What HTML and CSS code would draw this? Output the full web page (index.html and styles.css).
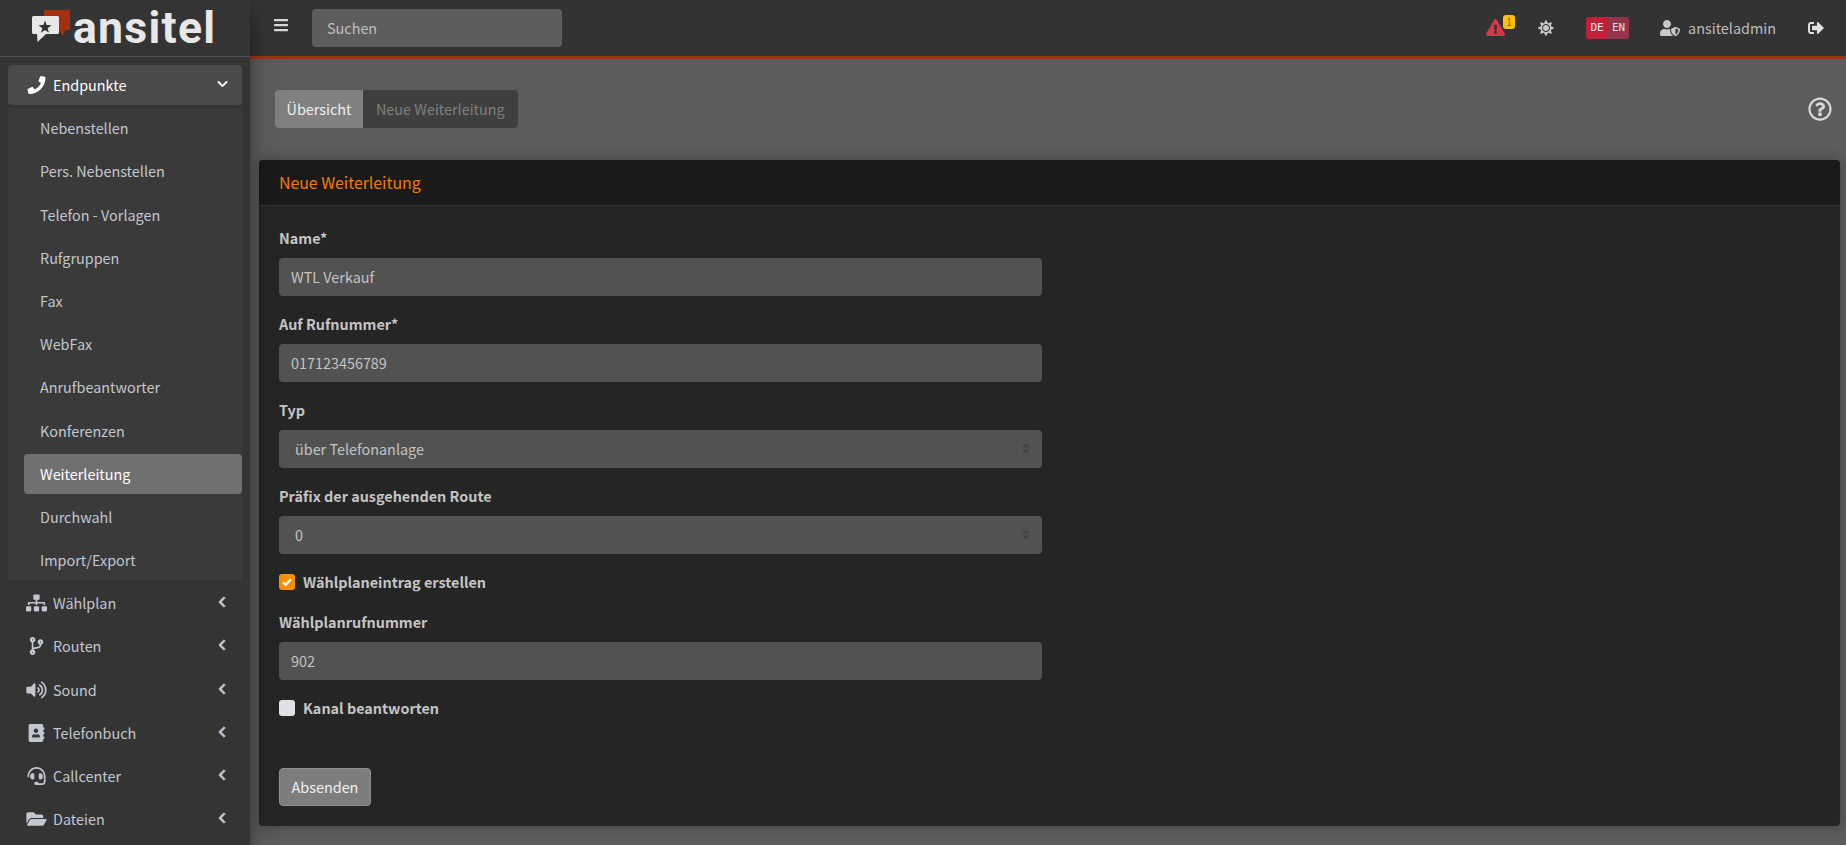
FILE: index.html
```html
<!DOCTYPE html>
<html lang="de">
<head>
<meta charset="utf-8">
<title>ansitel</title>
<link rel="stylesheet" href="styles.css">
</head>
<body>
<svg class="defs" aria-hidden="true"><defs>
<symbol id="chev-l" viewBox="0 0 320 512"><path d="M34.52 239.03L228.87 44.69c9.37-9.37 24.57-9.37 33.94 0l22.67 22.67c9.36 9.36 9.37 24.52.04 33.9L131.49 256l154.02 154.75c9.34 9.38 9.32 24.54-.04 33.9l-22.67 22.67c-9.37 9.37-24.57 9.37-33.94 0L34.52 272.97c-9.37-9.37-9.37-24.57 0-33.94z"/></symbol>
<symbol id="updown" viewBox="0 0 16 20"><path d="M8 0l8 8H0zM8 20l-8-8h16z"/></symbol>
</defs></svg>
<aside class="sidebar">
  <div class="brand">
    <svg class="brand-icon" viewBox="0 0 38 33"><path fill="#a5300f" d="M12 0h25a1 1 0 0 1 1 1v18a1 1 0 0 1-1 1h-4l-2 6-4-6H12z"/><path fill="#e8e8e8" d="M1.500 6h24A1.500 1.500 0 0 1 27 7.500V22.500A1.500 1.500 0 0 1 25.500 24H14l-8.500 8-.5-8H1.500A1.500 1.500 0 0 1 0 22.500V7.500A1.500 1.500 0 0 1 1.500 6z"/><path fill="#2e2e2e" d="M13 10.500l1.600 4.600 4.900.1-3.900 3 1.400 4.600-4-2.700-4 2.700 1.400-4.600-3.900-3 4.900-.1z"/></svg>
    <span class="brand-text">ansitel</span>
  </div>
  <nav class="nav">
    <a class="nav-link open"><svg class="ico" viewBox="0 0 512 512"><path d="M493.4 24.6l-104-24c-11.3-2.6-22.9 3.3-27.5 13.9l-48 112c-4.2 9.8-1.4 21.3 6.9 28l60.6 49.6c-36 76.7-98.9 140.500-177.200 177.200l-49.600-60.600c-6.800-8.300-18.200-11.100-28-6.900l-112 48C3.900 366.500-2 378.100.6 389.400l24 104C27.100 504.200 36.700 512 48 512c256.100 0 464-207.500 464-464 0-11.200-7.700-20.900-18.600-23.400z"/></svg><span class="nav-label">Endpunkte</span><svg class="chev-down" viewBox="0 0 448 512"><path d="M207.029 381.476L12.686 187.132c-9.373-9.373-9.373-24.569 0-33.941l22.667-22.667c9.357-9.357 24.522-9.375 33.901-.04L224 284.505l154.745-154.021c9.379-9.335 24.544-9.317 33.901.04l22.667 22.667c9.373 9.373 9.373 24.569 0 33.941L240.971 381.476c-9.373 9.372-24.569 9.372-33.942 0z"/></svg></a>
    <ul class="subnav">
      <li><a class="sub-link">Nebenstellen</a></li>
      <li><a class="sub-link">Pers. Nebenstellen</a></li>
      <li><a class="sub-link">Telefon - Vorlagen</a></li>
      <li><a class="sub-link">Rufgruppen</a></li>
      <li><a class="sub-link">Fax</a></li>
      <li><a class="sub-link">WebFax</a></li>
      <li><a class="sub-link">Anrufbeantworter</a></li>
      <li><a class="sub-link">Konferenzen</a></li>
      <li><a class="sub-link active">Weiterleitung</a></li>
      <li><a class="sub-link">Durchwahl</a></li>
      <li><a class="sub-link">Import/Export</a></li>
    </ul>
    <a class="nav-link"><svg class="ico" viewBox="0 0 640 512"><path d="M128 352H32c-17.670 0-32 14.330-32 32v96c0 17.670 14.330 32 32 32h96c17.670 0 32-14.330 32-32v-96c0-17.670-14.330-32-32-32zm-24-80h192v48h48v-48h192v48h48v-57.590c0-21.170-17.230-38.410-38.410-38.410H344v-64h40c17.670 0 32-14.330 32-32V32c0-17.670-14.330-32-32-32H256c-17.670 0-32 14.330-32 32v96c0 17.670 14.330 32 32 32h40v64H94.410C73.230 224 56 241.230 56 262.410V320h48v-48zm264 80h-96c-17.670 0-32 14.330-32 32v96c0 17.670 14.330 32 32 32h96c17.670 0 32-14.330 32-32v-96c0-17.670-14.330-32-32-32zm240 0h-96c-17.670 0-32 14.330-32 32v96c0 17.670 14.330 32 32 32h96c17.670 0 32-14.330 32-32v-96c0-17.670-14.330-32-32-32z"/></svg><span class="nav-label">Wählplan</span><svg class="chev"><use href="#chev-l"/></svg></a>
    <a class="nav-link"><svg class="ico" viewBox="0 0 384 512"><path d="M384 144c0-44.200-35.800-80-80-80s-80 35.800-80 80c0 36.400 24.300 67.100 57.500 76.800-.6 16.100-4.200 28.500-11 36.900-15.400 19.200-49.300 22.400-85.200 25.700-28.200 2.600-57.400 5.400-81.300 16.900v-144c32.500-10.200 56-40.500 56-76.300 0-44.200-35.800-80-80-80S0 35.800 0 80c0 35.800 23.500 66.100 56 76.300v199.300C23.500 365.900 0 396.200 0 432c0 44.200 35.800 80 80 80s80-35.800 80-80c0-34-21.200-63.100-51.200-74.600 3.100-5.200 7.800-9.800 14.900-13.400 16.200-8.200 40.400-10.400 66.100-12.800 42.200-3.900 90-8.400 118.200-43.400 14-17.400 21.100-39.800 21.600-67.900 31.600-10.800 54.400-40.700 54.400-75.900zM80 64c8.800 0 16 7.200 16 16s-7.200 16-16 16-16-7.200-16-16 7.200-16 16-16zm0 384c-8.800 0-16-7.200-16-16s7.200-16 16-16 16 7.200 16 16-7.200 16-16 16zm224-320c8.800 0 16 7.200 16 16s-7.200 16-16 16-16-7.200-16-16 7.200-16 16-16z"/></svg><span class="nav-label">Routen</span><svg class="chev"><use href="#chev-l"/></svg></a>
    <a class="nav-link"><svg class="ico" viewBox="0 0 576 512"><path d="M215.030 71.050L126.060 160H24c-13.260 0-24 10.740-24 24v144c0 13.250 10.740 24 24 24h102.060l88.970 88.950c15.030 15.030 40.970 4.470 40.970-16.970V88.020c0-21.460-25.960-32-40.970-16.970zm233.320-51.080c-11.170-7.330-26.180-4.240-33.510 6.950-7.340 11.170-4.220 26.180 6.950 33.510 66.270 43.490 105.820 116.600 105.820 195.580 0 78.980-39.550 152.090-105.820 195.580-11.170 7.320-14.290 22.340-6.950 33.500 7.040 10.710 21.930 14.560 33.510 6.950C528.270 439.580 576 351.330 576 256S528.270 72.430 448.350 19.970zM480 256c0-63.530-32.060-121.940-85.770-156.240-11.190-7.140-26.030-3.820-33.120 7.460s-3.780 26.210 7.410 33.360C408.270 165.970 432 209.110 432 256s-23.730 90.030-63.480 115.420c-11.190 7.140-14.500 22.070-7.410 33.360 6.510 10.360 21.120 15.140 33.120 7.460C447.940 377.940 480 319.540 480 256zm-141.770-76.870c-11.580-6.330-26.190-2.160-32.610 9.450-6.390 11.610-2.160 26.200 9.450 32.610C327.980 228.280 336 241.630 336 256c0 14.380-8.020 27.720-20.920 34.810-11.610 6.410-15.840 21-9.450 32.610 6.440 11.660 21.050 15.800 32.610 9.450 28.230-15.550 45.770-45 45.770-76.880s-17.540-61.320-45.780-76.860z"/></svg><span class="nav-label">Sound</span><svg class="chev"><use href="#chev-l"/></svg></a>
    <a class="nav-link"><svg class="ico" viewBox="0 0 448 512"><path d="M436 160c6.600 0 12-5.400 12-12v-40c0-6.600-5.400-12-12-12h-20V48c0-26.500-21.500-48-48-48H48C21.500 0 0 21.500 0 48v416c0 26.500 21.500 48 48 48h320c26.500 0 48-21.500 48-48v-48h20c6.600 0 12-5.400 12-12v-40c0-6.600-5.400-12-12-12h-20v-64h20c6.600 0 12-5.400 12-12v-40c0-6.600-5.400-12-12-12h-20v-64h20zm-228-32c35.300 0 64 28.700 64 64s-28.700 64-64 64-64-28.700-64-64 28.700-64 64-64zm112 236.800c0 10.600-10 19.200-22.400 19.200H118.400C106 384 96 375.400 96 364.800v-19.200c0-31.800 30.100-57.600 67.200-57.600h5c12.300 5.100 25.700 8 39.800 8s27.600-2.900 39.800-8h5c37.100 0 67.200 25.800 67.200 57.600v19.200z"/></svg><span class="nav-label">Telefonbuch</span><svg class="chev"><use href="#chev-l"/></svg></a>
    <a class="nav-link"><svg class="ico" viewBox="0 0 512 512"><path d="M192 208c0-17.670-14.330-32-32-32h-16c-35.350 0-64 28.650-64 64v48c0 35.350 28.650 64 64 64h16c17.670 0 32-14.330 32-32V208zm176 144c35.350 0 64-28.650 64-64v-48c0-35.350-28.650-64-64-64h-16c-17.670 0-32 14.330-32 32v112c0 17.670 14.330 32 32 32h16zM256 0C113.180 0 4.580 118.830 0 256v16c0 8.840 7.160 16 16 16h16c8.840 0 16-7.160 16-16v-16c0-114.690 93.310-208 208-208s208 93.310 208 208h-.12c.08 2.430.12 165.720.12 165.720 0 23.350-18.930 42.280-42.280 42.280H320c0-26.510-21.490-48-48-48h-32c-26.510 0-48 21.490-48 48s21.490 48 48 48h181.720c49.860 0 90.280-40.420 90.280-90.280V256C507.420 118.830 398.820 0 256 0z"/></svg><span class="nav-label">Callcenter</span><svg class="chev"><use href="#chev-l"/></svg></a>
    <a class="nav-link"><svg class="ico" viewBox="0 0 576 512"><path d="M572.694 292.093L500.270 416.248A63.997 63.997 0 0 1 444.989 448H45.025c-18.523 0-30.064-20.093-20.731-36.093l72.424-124.155A64 64 0 0 1 152 256h399.964c18.523 0 30.064 20.093 20.730 36.093zM152 224h328v-48c0-26.510-21.490-48-48-48H272l-64-64H48C21.490 64 0 85.490 0 112v278.046l69.077-118.418C86.214 242.250 117.989 224 152 224z"/></svg><span class="nav-label">Dateien</span><svg class="chev"><use href="#chev-l"/></svg></a>
  </nav>
</aside>
<div class="main">
  <header class="topbar">
    <svg class="burger" viewBox="0 0 448 512"><path d="M16 132h416c8.837 0 16-7.163 16-16V76c0-8.837-7.163-16-16-16H16C7.163 60 0 67.163 0 76v40c0 8.837 7.163 16 16 16zm0 160h416c8.837 0 16-7.163 16-16v-40c0-8.837-7.163-16-16-16H16c-8.837 0-16 7.163-16 16v40c0 8.837 7.163 16 16 16zm0 160h416c8.837 0 16-7.163 16-16v-40c0-8.837-7.163-16-16-16H16c-8.837 0-16 7.163-16 16v40c0 8.837 7.163 16 16 16z"/></svg>
    <input class="search" type="text" placeholder="Suchen">
    <div class="top-right">
      <div class="alert"><svg class="alert-ico" viewBox="0 0 576 512"><path d="M569.517 440.013C587.975 472.007 564.806 512 527.940 512H48.054c-36.937 0-59.999-40.055-41.577-71.987L246.423 24.035c18.467-32.009 64.720-31.951 83.154 0l239.940 416.978zM288 354c-25.405 0-46 20.595-46 46s20.595 46 46 46 46-20.595 46-46-20.595-46-46-46zm-43.673-165.346l7.418 136c.347 6.364 5.609 11.346 11.982 11.346h48.546c6.373 0 11.635-4.982 11.982-11.346l7.418-136c.375-6.874-5.098-12.654-11.982-12.654h-63.383c-6.884 0-12.356 5.780-11.981 12.654z"/></svg><span class="badge">1</span></div>
      <svg class="sun" viewBox="0 0 512 512"><path d="M256 160c-52.900 0-96 43.100-96 96s43.100 96 96 96 96-43.100 96-96-43.100-96-96-96zm246.400 80.500l-94.700-47.300 33.500-100.400c4.500-13.600-8.400-26.500-21.900-21.900l-100.400 33.500-47.400-94.800c-6.400-12.800-24.600-12.800-31 0l-47.300 94.700L92.700 70.800c-13.600-4.500-26.500 8.400-21.900 21.900l33.500 100.400-94.700 47.400c-12.800 6.400-12.800 24.600 0 31l94.700 47.300-33.500 100.500c-4.500 13.600 8.400 26.500 21.900 21.900l100.400-33.500 47.300 94.700c6.400 12.800 24.600 12.800 31 0l47.300-94.700 100.400 33.500c13.600 4.500 26.500-8.400 21.900-21.900l-33.500-100.400 94.700-47.300c13-6.500 13-24.700.2-31.100zm-155.900 106c-49.900 49.900-131.100 49.900-181 0-49.900-49.900-49.900-131.100 0-181 49.900-49.900 131.100-49.900 181 0 49.900 49.900 49.900 131.100 0 181z"/></svg>
      <div class="lang"><span class="lang-de">DE</span><span class="lang-en">EN</span></div>
      <div class="user"><svg class="user-ico" viewBox="0 0 640 512"><path d="M622.300 271.100l-115.200-45c-4.100-1.600-12.600-3.700-22.200 0l-115.200 45c-10.700 4.200-17.700 14-17.700 24.900 0 111.600 68.700 188.800 132.900 213.900 9.600 3.700 18 1.600 22.200 0C558.400 489.900 640 420.500 640 296c0-10.900-7-20.700-17.700-24.900zM496 462.400V273.300l95.500 37.300c-5.600 87.100-60.900 135.400-95.500 151.800zM224 256c70.700 0 128-57.300 128-128S294.700 0 224 0 96 57.300 96 128s57.300 128 128 128zm96 40c0-2.500.8-4.800 1.100-7.200-2.500-.1-4.900-.8-7.500-.8h-16.700c-22.200 10.200-46.900 16-72.900 16s-50.600-5.800-72.900-16h-16.700C60.200 288 0 348.200 0 422.400V464c0 26.500 21.500 48 48 48h352c6.800 0 13.300-1.500 19.200-4-54-42.900-99.200-116.700-99.200-212z"/></svg><span>ansiteladmin</span></div>
      <svg class="logout" viewBox="0 0 512 512"><path d="M497 273L329 441c-15 15-41 4.500-41-17v-96H152c-13.300 0-24-10.700-24-24v-96c0-13.300 10.700-24 24-24h136V88c0-21.400 25.900-32 41-17l168 168c9.300 9.400 9.300 24.600 0 34zM192 436v-40c0-6.600-5.400-12-12-12H96c-17.700 0-32-14.300-32-32V160c0-17.700 14.300-32 32-32h84c6.600 0 12-5.400 12-12V76c0-6.600-5.400-12-12-12H96c-53 0-96 43-96 96v192c0 53 43 96 96 96h84c6.600 0 12-5.400 12-12z"/></svg>
    </div>
  </header>
  <main class="content">
    <div class="toolbar">
      <div class="tabs"><span class="tab current">Übersicht</span><span class="tab">Neue Weiterleitung</span></div>
      <svg class="help" viewBox="0 0 512 512"><path d="M256 8C119.043 8 8 119.083 8 256c0 136.997 111.043 248 248 248s248-111.003 248-248C504 119.083 392.957 8 256 8zm0 448c-110.532 0-200-89.431-200-200 0-110.495 89.472-200 200-200 110.491 0 200 89.471 200 200 0 110.530-89.431 200-200 200zm107.244-255.200c0 67.052-72.421 68.084-72.421 92.863V300c0 6.627-5.373 12-12 12h-45.647c-6.627 0-12-5.373-12-12v-8.659c0-35.745 27.100-50.034 47.579-61.516 17.561-9.845 28.324-16.541 28.324-29.579 0-17.246-21.999-28.693-39.784-28.693-23.189 0-33.894 10.977-48.942 29.969-4.057 5.120-11.460 6.071-16.666 2.124l-27.824-21.098c-5.107-3.872-6.251-11.066-2.644-16.363C184.846 131.491 214.940 112 261.794 112c49.071 0 101.450 38.304 101.450 88.800zM298 368c0 23.159-18.841 42-42 42s-42-18.841-42-42 18.841-42 42-42 42 18.841 42 42z"/></svg>
    </div>
    <section class="card">
      <h2 class="card-title">Neue Weiterleitung</h2>
      <form class="card-body">
        <div class="group"><label class="label">Name*</label><input class="control" type="text" value="WTL Verkauf"></div>
        <div class="group"><label class="label">Auf Rufnummer*</label><input class="control" type="text" value="017123456789"></div>
        <div class="group"><label class="label">Typ</label><div class="select-wrap"><select class="control select"><option>über Telefonanlage</option></select><svg class="updown"><use href="#updown"/></svg></div></div>
        <div class="group"><label class="label">Präfix der ausgehenden Route</label><div class="select-wrap"><select class="control select"><option>0</option></select><svg class="updown"><use href="#updown"/></svg></div></div>
        <div class="group check-row"><span class="box checked"><svg viewBox="0 0 16 16"><path d="M4 8.300l2.700 2.500L12 5.200" fill="none" stroke="#fff" stroke-width="2.400"/></svg></span><span class="label">Wählplaneintrag erstellen</span></div>
        <div class="group"><label class="label">Wählplanrufnummer</label><input class="control" type="text" value="902"></div>
        <div class="group check-row"><span class="box"></span><span class="label">Kanal beantworten</span></div>
        <button class="submit" type="button">Absenden</button>
      </form>
    </section>
  </main>
</div>
</body>
</html>
```
FILE: styles.css
```css
* { box-sizing: border-box; }
html, body { height: 100%; }
body {
  margin: 0;
  display: flex;
  height: 845px;
  overflow: hidden;
  background: #5c5c5c;
  font-family: "Noto Sans CJK SC", "Source Sans Pro", "Noto Sans", sans-serif;
  font-size: 14.4px;
  line-height: 24px;
  color: #c8c8c8;
}
.defs { position: absolute; width: 0; height: 0; }
.sidebar {
  flex: 0 0 250px;
  width: 250px;
  background: #343434;
  box-shadow: 0 14px 28px rgba(0,0,0,.25), 0 10px 10px rgba(0,0,0,.22);
  position: relative;
  z-index: 2;
  overflow: hidden;
}
.brand {
  height: 57px;
  border-bottom: 1px solid #4b545c;
  display: flex;
  align-items: flex-start;
  padding: 2px 0 0 32px;
  gap: 3px;
}
.brand-icon { width: 38px; height: 33px; flex: none; margin-top: 8px; }
.brand-text {
  font-family: Roboto, "Noto Sans", sans-serif;
  font-weight: 700;
  font-size: 44.6px;
  line-height: 52px;
  letter-spacing: 1.25px;
  color: #e8e8e8;
}
.nav { padding: 8px 8px 0; }
.nav-link {
  display: flex;
  align-items: center;
  height: 40px;
  margin-bottom: 3.2px;
  padding: 0 16px 0 19px;
  border-radius: 4px;
  color: #c2c7d0;
}
.nav-link.open { background: #4a4a4a; color: #fff; }
.ico { width: 21px; height: 18px; fill: currentColor; margin-right: 6px; flex: none; margin-left: -1px; }
.nav-label { flex: 1; }
.chev { width: 8px; height: 12px; fill: currentColor; stroke: currentColor; stroke-width: 30; flex: none; margin-top: -2px; }
.chev-down { width: 11px; height: 12px; fill: currentColor; flex: none; margin: -2px -1.5px 0 0; }
.subnav { list-style: none; margin: 0 0 3.2px; padding: 0; background: #3a3a3a; }
.subnav li + li { margin-top: 3.2px; }
.sub-link {
  display: block;
  height: 40px;
  margin-left: 16px;
  padding: 8px 16px;
  border-radius: 4px;
  color: #c2c7d0;
}
.sub-link.active { background: #707070; color: #fff; }
.main { flex: 1; min-width: 0; display: flex; flex-direction: column; }
.topbar {
  flex: none;
  height: 59px;
  background: #333;
  border-bottom: 3px solid #a5300f;
  display: flex;
  align-items: center;
  padding: 0 22px 0 24px;
  box-shadow: 0 1px 4px rgba(0,0,0,.1);
}
.burger { width: 14px; height: 16px; fill: #d8d8d8; margin-top: -6px; }
.search {
  width: 250px;
  height: 38px;
  margin-left: 24px;
  border: 0;
  border-radius: 4px;
  background: #5d5d5d;
  color: #c8c8c8;
  padding: 0 15px 2px;
  font: inherit;
}
.search::placeholder { color: #bdbdbd; opacity: 1; }
.top-right { margin-left: auto; display: flex; align-items: center; color: #bdbdbd; margin-top: -1px; }
.alert { position: relative; width: 19px; height: 17px; margin-right: 33px; }
.alert-ico { display: block; width: 19px; height: 17px; fill: #dc3545; }
.badge {
  position: absolute;
  left: 17px;
  top: -4px;
  width: 12px;
  height: 14px;
  border-radius: 3px;
  background: #ffc107;
  color: #7a6a20;
  font-size: 10px;
  line-height: 14px;
  text-align: center;
}
.sun { width: 16px; height: 16px; fill: #c8c8c8; margin-right: 32px; }
.lang {
  display: flex;
  height: 22px;
  border-radius: 3px;
  overflow: hidden;
  font-family: "DejaVu Sans Mono", monospace;
  font-size: 11px;
  line-height: 22px;
  margin-right: 31px;
}
.lang-de { width: 22px; background: #c21f39; color: #f5f5f5; text-align: center; }
.lang-en { width: 21px; background: #943448; color: #dcdcdc; text-align: center; }
.user { display: flex; align-items: center; gap: 8px; margin-right: 32px; }
.user-ico { width: 20px; height: 16px; fill: #c8c8c8; }
.logout { width: 16px; height: 16px; fill: #e0e0e0; }
.content { flex: 1; min-height: 0; padding: 0 6px 0 9px; background: #5c5c5c; }
.toolbar {
  height: 101px;
  padding: 31px 8px 0 16px;
  display: flex;
  justify-content: space-between;
  align-items: flex-start;
}
.tabs { display: flex; height: 38px; background: #3f3f3f; border-radius: 4px; overflow: hidden; }
.tab { padding: 7px 13px; color: #7f7f7f; }
.tab.current { background: #808080; color: #efefef; padding: 7px 11.5px; }
.help { width: 24px; height: 24px; fill: #d8d8d8; margin-top: 7px; }
.card {
  background: #252525;
  border-radius: 4px;
  height: 666px;
  box-shadow: 0 0 14px rgba(0,0,0,.3);
  overflow: hidden;
}
.card-title {
  margin: 0;
  height: 46px;
  padding: 10px 20px;
  background: #1a1a1a;
  border-bottom: 1px solid #333;
  color: #f57c00;
  font-size: 15.84px;
  font-weight: 400;
  line-height: 26px;
}
.card-body { padding: 20px 20px 0; }
.group { margin-bottom: 16px; width: 763px; }
.label { display: block; font-weight: 700; color: #c4c4c4; margin-bottom: 8px; }
.check-row { display: flex; align-items: center; gap: 8px; height: 24px; }
.check-row .label { margin: 0; }
.control {
  display: block;
  width: 100%;
  height: 38px;
  padding: 0 12px 1px;
  border: 0;
  border-radius: 4px;
  background: #525252;
  color: #c4c4c4;
  font: inherit;
}
.select-wrap { position: relative; }
.select { appearance: none; padding: 0 12px 0 16px; }
.updown { position: absolute; right: 12px; top: 13px; width: 8px; height: 11px; fill: #3f434a; }
.box { width: 16px; height: 16px; border-radius: 3px; background: #dee2e6; flex: none; }
.box.checked { background: #f78e00; }
.box svg { display: block; width: 16px; height: 16px; }
.submit {
  display: block;
  width: 92px;
  height: 38px;
  margin-top: 48px;
  border: 1px solid #8f8f8f;
  border-radius: 4px;
  background: #7d7d7d;
  color: #f0f0f0;
  font: inherit;
}
```
